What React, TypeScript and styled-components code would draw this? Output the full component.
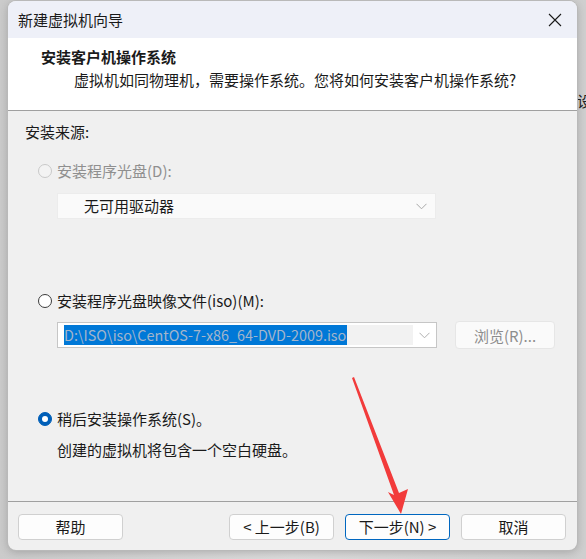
import styled, { createGlobalStyle } from "styled-components";

const GlobalStyle = createGlobalStyle`
    html, body {
        margin: 0;
        padding: 0;
    }
    body {
        width: 586px;
        height: 559px;
        overflow: hidden;
        background: #d6d6d6;
        font-family: "Noto Sans", "Noto Sans CJK SC", sans-serif;
        font-size: 15px;
        color: #1a1a1a;
    }
`;

type radioProps = {
    checked?: boolean,
    disabled?: boolean
}

const Chevron = ({ color }: { color: string }) => (
    <svg width="11" height="7" viewBox="0 0 11 7">
        <polyline points="0.5,0.8 5.5,5.8 10.5,0.8" fill="none" stroke={color} strokeWidth="1" />
    </svg>
);

const App = () => {
    return (
        <>
            <GlobalStyle />
            <Page>
                <BackText>设</BackText>
                <Dialog>
                    <TitleBar>
                        <span>新建虚拟机向导</span>
                        <svg className="close" width="14" height="14" viewBox="0 0 14 14">
                            <path d="M1 1 L13 13 M13 1 L1 13" stroke="#1a1a1a" strokeWidth="1.1" />
                        </svg>
                    </TitleBar>

                    <Header>
                        <h1>安装客户机操作系统</h1>
                        <p>虚拟机如同物理机，需要操作系统。您将如何安装客户机操作系统?</p>
                    </Header>

                    <Body>
                        <SourceLabel>安装来源:</SourceLabel>

                        <RadioRow disabled style={{ marginTop: 19 }}>
                            <Radio disabled />
                            <span>安装程序光盘(D):</span>
                        </RadioRow>
                        <DriveSelect>
                            <span>无可用驱动器</span>
                            <Chevron color="#a8a8a8" />
                        </DriveSelect>

                        <RadioRow style={{ marginTop: 72 }}>
                            <Radio />
                            <span>安装程序光盘映像文件(iso)(M):</span>
                        </RadioRow>
                        <IsoRow>
                            <IsoSelect>
                                <span className="value">D:\ISO\iso\CentOS-7-x86_64-DVD-2009.iso</span>
                                <span className="rest"></span>
                                <span className="arrow">
                                    <Chevron color="#b0b0b0" />
                                </span>
                            </IsoSelect>
                            <BrowseButton>浏览(R)...</BrowseButton>
                        </IsoRow>

                        <RadioRow style={{ marginTop: 60 }}>
                            <Radio checked />
                            <span>稍后安装操作系统(S)。</span>
                        </RadioRow>
                        <Description>创建的虚拟机将包含一个空白硬盘。</Description>
                    </Body>

                    <Footer>
                        <Button>帮助</Button>
                        <div className="spacer" />
                        <Button>&lt; 上一步(B)</Button>
                        <Button $primary>下一步(N) &gt;</Button>
                        <Button>取消</Button>
                    </Footer>
                </Dialog>

                <Arrow width="586" height="559" viewBox="0 0 586 559">
                    <polygon
                        points="352,378 394,495 388,492 401,514 408,489 399,493 354,377"
                        fill="#f23b3b"
                    />
                </Arrow>
            </Page>
        </>
    );
};

const Page = styled.div`
    position: relative;
    width: 586px;
    height: 559px;
    padding: 1px 0 0 8px;
    box-sizing: border-box;
    background: linear-gradient(90deg, #cbcbcb 0%, #dcdcdc 50%, #cfcfcf 100%);
`;

const BackText = styled.span`
    position: absolute;
    left: 577px;
    top: 90px;
    font-family: "Noto Sans CJK SC", sans-serif;
    font-size: 15px;
    color: #222;
`;

const Dialog = styled.div`
    position: relative;
    width: 569px;
    height: 549px;
    border-radius: 8px;
    overflow: hidden;
    background: #f0f0f0;
    box-shadow: 0 0 0 1px #b9b9b9, 0 2px 10px rgba(0, 0, 0, 0.22);
    display: flex;
    flex-direction: column;
`;

const TitleBar = styled.div`
    height: 37px;
    flex-shrink: 0;
    background: #eef0f8;
    display: flex;
    align-items: center;
    justify-content: space-between;
    padding: 0 15px 0 10px;
    font-family: "Noto Sans CJK SC", sans-serif;
    font-size: 15px;
    color: #1a1a1a;

    & .close {
        display: block;
    }
`;

const Header = styled.div`
    height: 73px;
    flex-shrink: 0;
    box-sizing: border-box;
    background: #ffffff;
    border-bottom: 1px solid #a0a0a0;
    padding: 9px 0 0 33px;

    & h1 {
        margin: 0;
        font-family: "Noto Sans CJK SC", sans-serif;
        font-size: 15px;
        font-weight: 700;
        line-height: 20px;
    }

    & p {
        margin: 3px 0 0 33px;
        font-family: "Noto Sans CJK SC", sans-serif;
        font-size: 15px;
        line-height: 20px;
    }
`;

const Body = styled.div`
    height: 390px;
    flex-shrink: 0;
    padding: 11px 0 0 17px;
    box-sizing: border-box;
    font-family: "Noto Sans CJK SC", sans-serif;
    line-height: 20px;
`;

const SourceLabel = styled.div`
    height: 20px;
`;

const RadioRow = styled.div<radioProps>`
    display: flex;
    align-items: center;
    gap: 5px;
    height: 20px;
    margin-left: 13px;
    color: ${({ disabled }) => (disabled ? "#8f8f8f" : "#1a1a1a")};
`;

const Radio = styled.span<radioProps>`
    width: 14px;
    height: 14px;
    border-radius: 50%;
    box-sizing: border-box;
    flex-shrink: 0;
    position: relative;
    background: ${({ checked, disabled }) =>
        checked ? "#005fb8" : disabled ? "#f3f3f3" : "#ffffff"};
    border: 1px solid ${({ checked, disabled }) =>
        checked ? "#005fb8" : disabled ? "#c9c9c9" : "#3c3c3c"};

    &::after {
        content: "";
        display: ${({ checked }) => (checked ? "block" : "none")};
        position: absolute;
        left: 3px;
        top: 3px;
        width: 6px;
        height: 6px;
        border-radius: 50%;
        background: #ffffff;
    }
`;

const DriveSelect = styled.div`
    margin: 12px 0 0 32px;
    width: 379px;
    height: 26px;
    box-sizing: border-box;
    background: #fafafa;
    border: 1px solid #ececec;
    display: flex;
    align-items: center;
    justify-content: space-between;
    padding: 0 8px 0 26px;
    color: #1a1a1a;
`;

const IsoRow = styled.div`
    margin: 10px 0 0 32px;
    height: 28px;
    display: flex;
    align-items: center;
    gap: 18px;
`;

const IsoSelect = styled.div`
    width: 380px;
    height: 26px;
    box-sizing: border-box;
    border: 1px solid #c6c6c6;
    background: #ffffff;
    display: flex;
    align-items: stretch;
    padding: 2px 0 2px 6px;

    & .value {
        background: #0078d7;
        color: #a3b5cb;
        font-size: 14.4px;
        line-height: 20px;
        white-space: nowrap;
        padding-right: 1px;
    }

    & .rest {
        flex: 1;
        background: #f2f2f2;
    }

    & .arrow {
        width: 23px;
        display: flex;
        align-items: center;
        justify-content: center;
    }
`;

const BrowseButton = styled.button`
    width: 100px;
    height: 28px;
    box-sizing: border-box;
    border: 1px solid #e6e6e6;
    border-radius: 4px;
    background: #fafafa;
    color: #8d8d8d;
    font-family: "Noto Sans CJK SC", sans-serif;
    font-size: 15px;
    padding: 0;
`;

const Description = styled.div`
    margin: 11px 0 0 32px;
    height: 20px;
`;

const Footer = styled.div`
    flex: 1;
    border-top: 1px solid #a0a0a0;
    display: flex;
    align-items: flex-start;
    gap: 11px;
    padding: 12px 11px 0 10px;

    & .spacer {
        flex: 1;
    }
`;

const Button = styled.button<{ $primary?: boolean }>`
    width: 105px;
    height: 26px;
    box-sizing: border-box;
    border-radius: 4px;
    background: #fdfdfd;
    border: 1px solid ${({ $primary }) => ($primary ? "#0067c0" : "#d0d0d0")};
    font-family: "Noto Sans CJK SC", sans-serif;
    font-size: 15px;
    color: #1a1a1a;
    padding: 0;
    line-height: 22px;
`;

const Arrow = styled.svg`
    position: absolute;
    left: 0;
    top: 0;
    pointer-events: none;
`;

export default App;
